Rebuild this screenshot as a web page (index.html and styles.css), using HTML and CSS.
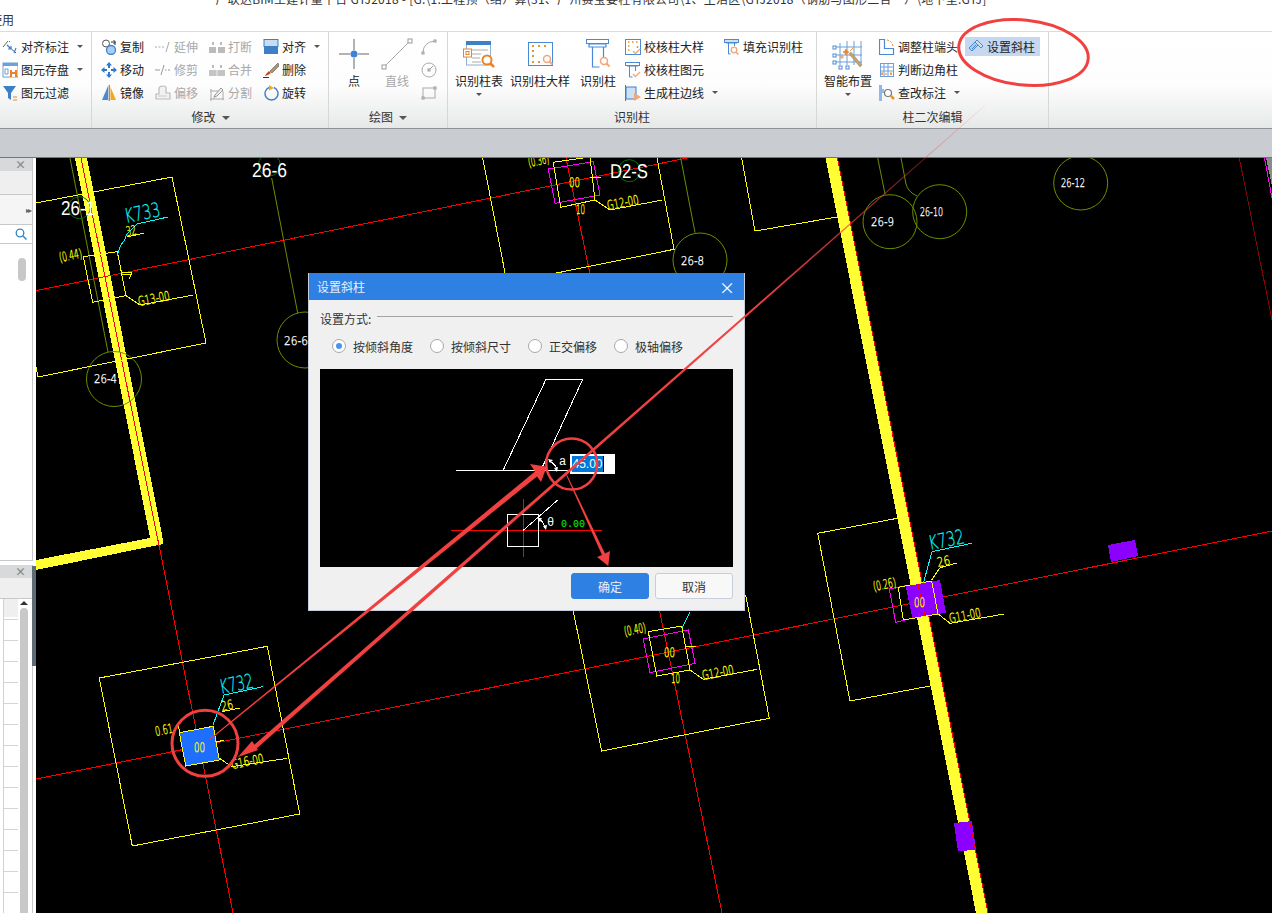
FILE: index.html
```html
<!DOCTYPE html>
<html lang="zh-CN">
<head>
<meta charset="utf-8">
<title>设置斜柱</title>
<link rel="stylesheet" href="styles.css">
</head>
<body>
<svg class="sprite" width="0" height="0">
  <defs>
    <symbol id="i-alignmark" viewBox="0 0 16 16"><path d="M1 8 6 2M7 3l1-1M6 7l8 7" fill="none" stroke="#666"/><path d="M5 6l4 4M9 10V7M9 10H6M14 9l-2 5" fill="none" stroke="#3d80c8" stroke-width="1.2"/></symbol>
    <symbol id="i-save" viewBox="0 0 16 16"><rect x="1" y="1" width="15" height="14" fill="#fff" stroke="#6d9fd8"/><rect x="1" y="1" width="15" height="3" fill="#6d9fd8"/><path d="M3 7h3v5H3z" fill="none" stroke="#6d9fd8"/><rect x="8" y="8" width="7" height="7" fill="#e8842c"/><rect x="10" y="8" width="3" height="2" fill="#fff"/><rect x="10" y="12" width="3" height="3" fill="#fff"/></symbol>
    <symbol id="i-filter" viewBox="0 0 16 16"><path d="M1 1h13L9 8v7L6 13V8z" fill="#3d80c8"/><path d="M11 12h4M11 15h4" stroke="#e8842c" stroke-width="1.2"/></symbol>
    <symbol id="i-copy" viewBox="0 0 16 16"><circle cx="5" cy="4.500" r="3.500" fill="#fff" stroke="#555"/><circle cx="10" cy="11" r="4.500" fill="#a9cdf0" stroke="#3d80c8" stroke-width="1.300"/><path d="M10 3h4v3M12.500 1 14.500 3 12.500 5" fill="none" stroke="#333"/></symbol>
    <symbol id="i-move" viewBox="0 0 16 16"><path d="M8 0 11 3.500H9V7h3.500V5L16 8l-3.500 3V9H9v3.500h2L8 16l-3-3.500h2V9H3.500v2L0 8l3.500-3v2H7V3.500H5z" fill="#2c78cf"/><rect x="6" y="6" width="4" height="4" fill="#fff"/></symbol>
    <symbol id="i-mirror" viewBox="0 0 16 16"><path d="M7 1v14H1z" fill="#4a8ad4"/><path d="M9.500 2v13H15z" fill="#f0a81e"/><path d="M8.200 0v16" stroke="#666"/></symbol>
    <symbol id="i-extend" viewBox="0 0 16 16"><path d="M0 8h2M3.500 8h2M7 8h2M14 3l-3 10" fill="none" stroke="#aaa"/></symbol>
    <symbol id="i-trim" viewBox="0 0 16 16"><path d="M0 8h5M10 8h1.500M13 8h2M9 3 6 13" fill="none" stroke="#999"/></symbol>
    <symbol id="i-break" viewBox="0 0 16 16"><rect x="0" y="8" width="7" height="6" fill="#bbb"/><rect x="9" y="8" width="7" height="6" fill="#bbb"/><path d="M3 3h2v3H3zM11 3h2v3h-2z" fill="#bbb"/></symbol>
    <symbol id="i-merge" viewBox="0 0 16 16"><rect x="0" y="8" width="16" height="6" fill="#c4c4c4"/><path d="M3 3h2v3H3zM11 3h2v3h-2z" fill="#bbb"/><path d="M8 8v6" stroke="#eee"/></symbol>
    <symbol id="i-offset" viewBox="0 0 16 16"><path d="M1 14V9h3V4q0-3 4-3t3 4v3h4v6z" fill="#f2f2f2" stroke="#bbb" stroke-width="1.200"/><path d="M3 11h9" stroke="#ccc"/></symbol>
    <symbol id="i-split" viewBox="0 0 16 16"><path d="M1 6h9M1 14h14M2 4v12M14 6v9M4 14 12 6" fill="none" stroke="#aaa"/><path d="m6 10 6-7 2 2-6 6-3 1z" fill="#eee" stroke="#999"/></symbol>
    <symbol id="i-align" viewBox="0 0 16 16"><rect x="1" y="0.500" width="14" height="7" fill="#c8dcf4" stroke="#3d80c8"/><rect x="1" y="8" width="14" height="7" fill="#3d80c8"/></symbol>
    <symbol id="i-delete" viewBox="0 0 16 16"><path d="M15 1 7 9l2 2 7-7z" fill="#b59468" stroke="#555" stroke-width="0.600"/><path d="M6 9 3 12l-1 2 3-1 3-2z" fill="#c9491c"/><path d="M0 15.500h6" stroke="#333"/></symbol>
    <symbol id="i-rotate" viewBox="0 0 16 16"><path d="M6 2.500a6.500 6.500 0 1 0 5 0" fill="none" stroke="#3d80c8" stroke-width="1.400"/><path d="M6 0v5.500L11 3z" fill="#f0a81e"/></symbol>
    <symbol id="i-point" viewBox="0 0 32 32"><path d="M16 1v11M16 20v11M1 16h11M20 16h11" stroke="#666"/><circle cx="16" cy="16" r="3.500" fill="#3d80d8"/></symbol>
    <symbol id="i-line" viewBox="0 0 32 32"><path d="M3 29 29 3" stroke="#aaa"/><rect x="1" y="27" width="4" height="4" fill="#fff" stroke="#999"/><rect x="27" y="1" width="4" height="4" fill="#fff" stroke="#999"/></symbol>
    <symbol id="i-arc" viewBox="0 0 16 16"><path d="M2 14q0-11 12-12" fill="none" stroke="#aaa"/><rect x="1" y="13" width="2" height="2" fill="#fff" stroke="#999"/><rect x="13" y="1" width="2" height="2" fill="#fff" stroke="#999"/></symbol>
    <symbol id="i-circle" viewBox="0 0 16 16"><circle cx="8" cy="8" r="7" fill="none" stroke="#aaa"/><path d="M8 8l4-4" stroke="#aaa"/><rect x="7" y="7" width="2" height="2" fill="#fff" stroke="#999"/></symbol>
    <symbol id="i-rect" viewBox="0 0 16 16"><rect x="2" y="3" width="12" height="10" fill="none" stroke="#aaa"/><rect x="1" y="12" width="2" height="2" fill="#fff" stroke="#999"/><rect x="13" y="2" width="2" height="2" fill="#fff" stroke="#999"/></symbol>
    <symbol id="i-table" viewBox="0 0 32 32"><rect x="3.500" y="4" width="24" height="23" fill="#fff" stroke="#8fb0d0"/><rect x="3" y="3" width="25" height="4" fill="#3d80c8"/><path d="M9 12h16M9 16h9M9 20h8M9 24h9" stroke="#aaa"/><rect x="0.500" y="11" width="8" height="8" fill="#fff" stroke="#e8842c"/><rect x="3" y="13.500" width="3" height="3" fill="none" stroke="#e8842c"/><circle cx="24" cy="22" r="4.500" fill="#fff" stroke="#e8842c" stroke-width="2"/><path d="m27 25 4 4" stroke="#e8842c" stroke-width="2.500"/></symbol>
    <symbol id="i-sample" viewBox="0 0 32 32"><rect x="4.500" y="4.500" width="24" height="23" fill="#fff" stroke="#4a8ad4"/><path d="M8 8h2M14 8h2M20 8h2M8 13h2M8 18h2M8 24h2M14 24h2" stroke="#e8942c" stroke-width="2"/><circle cx="23" cy="21" r="3.500" fill="#fff" stroke="#f0a878" stroke-width="1.500"/><path d="m25.500 23.500 3 3" stroke="#f0a878" stroke-width="2"/></symbol>
    <symbol id="i-column" viewBox="0 0 32 32"><rect x="4.500" y="1.500" width="22" height="4" fill="#fff" stroke="#4a8ad4"/><path d="M7 6h17v3H7zM10.500 9v20h7M21.500 9v10" fill="none" stroke="#4a8ad4" stroke-width="1.200"/><circle cx="22" cy="23" r="3.500" fill="#fff" stroke="#f0a878" stroke-width="1.500"/><path d="m24.500 25.500 3 3" stroke="#f0a878" stroke-width="2"/></symbol>
    <symbol id="i-checksample" viewBox="0 0 16 16"><rect x="0.500" y="0.500" width="15" height="15" fill="#fff" stroke="#4a8ad4"/><path d="M3 3h1.500M7 3h1.500M11 3h1.500M3 7h1.500M3 11h1.500M12.500 7v2" stroke="#e8942c" stroke-width="1.500"/><path d="m8 12 2.500 2.500L15 10" fill="none" stroke="#f0a878" stroke-width="1.300"/></symbol>
    <symbol id="i-checkcol" viewBox="0 0 16 16"><rect x="0.500" y="0.500" width="14" height="3" fill="#fff" stroke="#4a8ad4"/><path d="M2 4h11M4.500 4v11h3M10.500 4v5" fill="none" stroke="#4a8ad4"/><path d="m8 12 2.500 2.500L15 10" fill="none" stroke="#f0a878" stroke-width="1.300"/></symbol>
    <symbol id="i-genedge" viewBox="0 0 16 16"><path d="M.5 0v16" stroke="#3d80c8"/><rect x="1" y="2" width="10" height="12" fill="#cfe0f5" stroke="#3d80c8"/><path d="M9 8l7 4-7 4z" fill="#f0a878"/></symbol>
    <symbol id="i-fill" viewBox="0 0 16 16"><rect x="0.500" y="0.500" width="14" height="3" fill="#cfe0f5" stroke="#4a8ad4"/><path d="M2 4h11M4.500 4v11h2M10.500 4v3" fill="none" stroke="#4a8ad4"/><circle cx="10" cy="11" r="2.800" fill="#fff" stroke="#f0a878" stroke-width="1.300"/><path d="m12 13 2.500 2.500" stroke="#f0a878" stroke-width="1.500"/></symbol>
    <symbol id="i-smart" viewBox="0 0 32 32"><path d="M8 5v22M15 3v24M22 3v24M29 3v24M2 9h28M2 17h28M2 24h28" stroke="#6d9fd8" fill="none"/><g fill="#fff" stroke="#4a8ad4"><rect x="1" y="8" width="3" height="3"/><rect x="1" y="16" width="3" height="3"/><rect x="1" y="23" width="3" height="3"/><rect x="7" y="28" width="3" height="3"/><rect x="14" y="28" width="3" height="3"/></g><path d="m17 16 11 13 2-2-11-13z" fill="#c9a06c" stroke="#888" stroke-width="0.500"/><path d="M14 11l1 2 2 1-2 1-1 2-1-2-2-1 2-1zM8 19l4 0M10 17v4M21 10l-3 3" fill="#e8842c" stroke="#e8842c" stroke-width="0.800"/></symbol>
    <symbol id="i-adjust" viewBox="0 0 16 16"><path d="M.5 .5h5v9h9v6H.5z" fill="#fff" stroke="#4a8ad4" stroke-width="1.200"/><path d="M8 1q5 1 6 6" fill="none" stroke="#e8942c" stroke-dasharray="2 1.500"/></symbol>
    <symbol id="i-corner" viewBox="0 0 16 16"><rect x="1.500" y="1.500" width="13" height="13" fill="#fff" stroke="#6d9fd8"/><path d="M5 1v14M9 1v14M1 5h14M1 9h14" stroke="#6d9fd8"/><path d="M2 12h2M6 12h2M11 12h2M3 10v3M12 10v3" stroke="#e8842c"/></symbol>
    <symbol id="i-annot" viewBox="0 0 16 16"><path d="M0 0h3v4h2v4H3v8H0z" fill="#8db8e8"/><circle cx="9" cy="8" r="3.500" fill="#fff" stroke="#777" stroke-width="1.200"/><path d="m12 11 3 3" stroke="#e8942c" stroke-width="2.500"/></symbol>
    <symbol id="i-tilt" viewBox="0 0 16 16"><path d="M1 9 8 2l3 3-7 7z" fill="#a9cdf0" stroke="#4a8ad4"/><path d="M9 1l6 6-2 2-6-6zM8 6l-4 4" fill="#cfe0f5" stroke="#4a8ad4"/></symbol>
  </defs>
</svg>

<div class="app">
  <header class="titlebar"><span class="title-text">广联达BIM土建计量平台 GTJ2018 - [G:\1.工程预（结）算(31、广州赛宝要柱有限公司\1、生活区\GTJ2018（钢筋与图形二合一）\地下室.GTJ]</span></header>
  <nav class="menubar"><span class="menu-item">使用</span></nav>

  <section class="ribbon">
    <div class="group g1">
      <div class="group-body">
        <div class="stack">
          <div class="row"><svg class="ic"><use href="#i-alignmark"/></svg><span>对齐标注</span><i class="caret"></i></div>
          <div class="row"><svg class="ic"><use href="#i-save"/></svg><span>图元存盘</span><i class="caret"></i></div>
          <div class="row"><svg class="ic"><use href="#i-filter"/></svg><span>图元过滤</span></div>
        </div>
      </div>
      <div class="group-label"></div>
    </div>

    <div class="group g2">
      <div class="group-body">
        <div class="grid4">
          <div class="row"><svg class="ic"><use href="#i-copy"/></svg><span>复制</span></div>
          <div class="row off"><svg class="ic"><use href="#i-extend"/></svg><span>延伸</span></div>
          <div class="row off"><svg class="ic"><use href="#i-break"/></svg><span>打断</span></div>
          <div class="row"><svg class="ic"><use href="#i-align"/></svg><span>对齐</span><i class="caret"></i></div>
          <div class="row"><svg class="ic"><use href="#i-move"/></svg><span>移动</span></div>
          <div class="row off"><svg class="ic"><use href="#i-trim"/></svg><span>修剪</span></div>
          <div class="row off"><svg class="ic"><use href="#i-merge"/></svg><span>合并</span></div>
          <div class="row"><svg class="ic"><use href="#i-delete"/></svg><span>删除</span></div>
          <div class="row"><svg class="ic"><use href="#i-mirror"/></svg><span>镜像</span></div>
          <div class="row off"><svg class="ic"><use href="#i-offset"/></svg><span>偏移</span></div>
          <div class="row off"><svg class="ic"><use href="#i-split"/></svg><span>分割</span></div>
          <div class="row"><svg class="ic"><use href="#i-rotate"/></svg><span>旋转</span></div>
        </div>
      </div>
      <div class="group-label">修改<i class="caret big"></i></div>
    </div>

    <div class="group g3">
      <div class="group-body">
        <div class="big-btn w30"><svg class="ic-l"><use href="#i-point"/></svg><span>点</span></div>
        <div class="big-btn w30 off"><svg class="ic-l"><use href="#i-line"/></svg><span>直线</span></div>
        <div class="stack mini">
          <div class="row"><svg class="ic"><use href="#i-arc"/></svg></div>
          <div class="row"><svg class="ic"><use href="#i-circle"/></svg></div>
          <div class="row"><svg class="ic"><use href="#i-rect"/></svg></div>
        </div>
      </div>
      <div class="group-label">绘图<i class="caret big"></i></div>
    </div>

    <div class="group g4">
      <div class="group-body">
        <div class="big-btn w48"><svg class="ic-l"><use href="#i-table"/></svg><span>识别柱表</span><i class="caret"></i></div>
        <div class="big-btn w60"><svg class="ic-l"><use href="#i-sample"/></svg><span>识别柱大样</span></div>
        <div class="big-btn w36"><svg class="ic-l"><use href="#i-column"/></svg><span>识别柱</span></div>
        <div class="stack w99">
          <div class="row"><svg class="ic"><use href="#i-checksample"/></svg><span>校核柱大样</span></div>
          <div class="row"><svg class="ic"><use href="#i-checkcol"/></svg><span>校核柱图元</span></div>
          <div class="row"><svg class="ic"><use href="#i-genedge"/></svg><span>生成柱边线</span><i class="caret"></i></div>
        </div>
        <div class="stack">
          <div class="row"><svg class="ic"><use href="#i-fill"/></svg><span>填充识别柱</span></div>
        </div>
      </div>
      <div class="group-label">识别柱</div>
    </div>

    <div class="group g5">
      <div class="group-body">
        <div class="big-btn w48"><svg class="ic-l"><use href="#i-smart"/></svg><span>智能布置</span><i class="caret"></i></div>
        <div class="stack w86">
          <div class="row"><svg class="ic"><use href="#i-adjust"/></svg><span>调整柱端头</span></div>
          <div class="row"><svg class="ic"><use href="#i-corner"/></svg><span>判断边角柱</span></div>
          <div class="row"><svg class="ic"><use href="#i-annot"/></svg><span>查改标注</span><i class="caret"></i></div>
        </div>
        <div class="stack">
          <div class="row active"><svg class="ic"><use href="#i-tilt"/></svg><span>设置斜柱</span></div>
        </div>
      </div>
      <div class="group-label">柱二次编辑</div>
    </div>
  </section>

  <div class="band"></div>

  <main class="work">
    <aside class="side">
      <div class="panel panel-top">
        <div class="panel-head"><span class="close">×</span></div>
        <div class="panel-tint"></div>
        <div class="panel-tool"><span class="dbl">▸▸</span></div>
        <div class="panel-search">
          <svg class="search-ic" viewBox="0 0 12 12"><circle cx="5" cy="5" r="3.800" fill="none" stroke="#2e86c8" stroke-width="1.300"/><path d="m8 8 3.500 3.500" stroke="#2e86c8" stroke-width="1.500"/></svg>
        </div>
        <div class="panel-list"><div class="thumb"></div></div>
      </div>
      <div class="panel panel-bottom">
        <div class="panel-head"><span class="close">×</span></div>
        <div class="panel-tint tall"></div>
        <div class="table-wrap">
          <div class="table-rows"></div>
          <div class="scroll"><span class="scroll-up"></span><div class="scroll-bar"></div></div>
        </div>
        <div class="grip"></div>
      </div>
    </aside>

    <div class="canvas">
      <svg class="cad" viewBox="36 158 1236 755" width="1236" height="755">
        <!-- beams -->
        <polygon class="f-yellow" points="75,158 87,158 163,540 163,544 36,570 36,560 150,538"/>
        <polygon class="f-yellow" points="825.500,158 837.500,158 988,913 976,913"/>
        <polygon class="f-purple" points="954,823 972,821 976,850 958,851"/>
        <polygon class="f-purple" points="1108,545 1135,540 1138,556 1111,562"/>
        <line class="lr" x1="837.500" y1="158" x2="988" y2="913"/>

        <!-- axes -->
        <line class="lr" x1="81" y1="158" x2="233" y2="913"/>
        <line class="lr" x1="36" y1="290.700" x2="692" y2="157"/>
        <line class="lr" x1="36" y1="779" x2="1272" y2="531"/>
        <line class="lr" x1="566" y1="158" x2="722" y2="913"/>

        <!-- olive grid bubbles -->
        <line class="lo" x1="70" y1="158" x2="108" y2="352"/>
        <line class="lo" x1="271.700" y1="178" x2="297.700" y2="313"/>
        <line class="lo" x1="680.700" y1="158" x2="695" y2="232.700"/>
        <line class="lo" x1="877.700" y1="158" x2="885" y2="194"/>
        <path class="lo" d="M901 158 906 184Q908 192 917 196"/>
        <circle class="lo" cx="114" cy="379" r="27.500"/>
        <circle class="lo" cx="305" cy="340" r="28"/>
        <circle class="lo" cx="700" cy="260" r="27"/>
        <circle class="lo" cx="890" cy="221.700" r="27"/>
        <circle class="lo" cx="939.700" cy="211.700" r="27"/>
        <circle class="lo" cx="1080.700" cy="183" r="27"/>
        <circle class="lg" cx="79.300" cy="207.700" r="11"/>
        <circle class="lg" cx="269.300" cy="165" r="11"/>
        <circle class="lg" cx="629.300" cy="170.700" r="11"/>
        <text class="tw big" x="61" y="215" textLength="34" lengthAdjust="spacingAndGlyphs">26-1</text>
        <text class="tw big" x="252" y="177" textLength="35" lengthAdjust="spacingAndGlyphs">26-6</text>
        <text class="tw big" x="610" y="178" textLength="38" lengthAdjust="spacingAndGlyphs">D2-S</text>
        <text class="tw" x="94" y="383" textLength="23" lengthAdjust="spacingAndGlyphs">26-4</text>
        <text class="tw" x="284" y="345" textLength="24" lengthAdjust="spacingAndGlyphs">26-6</text>
        <text class="tw" x="681" y="265" textLength="23" lengthAdjust="spacingAndGlyphs">26-8</text>
        <text class="tw" x="871" y="226" textLength="23" lengthAdjust="spacingAndGlyphs">26-9</text>
        <text class="tw" x="920" y="216" textLength="23" lengthAdjust="spacingAndGlyphs">26-10</text>
        <text class="tw" x="1061" y="187" textLength="24" lengthAdjust="spacingAndGlyphs">26-12</text>

        <!-- right edge details -->
        <line class="ldr" x1="1239.300" y1="158" x2="1272" y2="320"/>
        <line class="lm" x1="1264.500" y1="158" x2="1272" y2="198"/>
        <polygon class="f-grey" points="1266,158 1272,158 1272,186"/>

        <!-- frames -->
        <polyline class="ly" points="36,203 172,177 206,343 38,377 36,367"/>
        <polyline class="ly" points="99.300,678 267.300,646.300 299.700,814 132.300,846 99.300,678"/>
        <polyline class="ly" points="482.700,158 507,283 674,249.300 657,158"/>
        <polyline class="ly" points="570,595 601.700,751 769.300,718.300 745.700,595"/>
        <polyline class="ly" points="741.700,158 755,231 837,217"/>
        <polyline class="ly" points="897.300,518.300 817.700,533.300 850,701 931.700,685.700"/>

        <!-- K733 -->
        <polygon class="ly" points="83.300,256.700 117.300,251.700 126,295.700 92.700,302.300"/>
        <polyline class="ly" points="126,295.700 140,305 193.300,295"/>
        <line class="ly" x1="127" y1="237" x2="144" y2="233"/>
        <polyline class="ly" points="122,272 132,272 129,279"/>
        <line class="ly" x1="122" y1="275" x2="132" y2="274"/>
        <path class="lc" d="M117 256Q120 245 124 241L127 234 137 224 168 217"/>
        <text class="tc" transform="rotate(-11 126 223)" x="126" y="223" textLength="36" lengthAdjust="spacingAndGlyphs">K733</text>
        <text class="ty" transform="rotate(-11 127 236)" x="127" y="236" textLength="10" lengthAdjust="spacingAndGlyphs">32</text>
        <text class="ty" transform="rotate(-11 60 262)" x="60" y="262" textLength="23" lengthAdjust="spacingAndGlyphs">(0.44)</text>
        <text class="ty" transform="rotate(-11 139 306)" x="139" y="306" textLength="32" lengthAdjust="spacingAndGlyphs">G13-00</text>

        <!-- top column -->
        <polygon class="lm" points="548.300,169 593.300,161.700 600,195 555,203.300"/>
        <polygon class="ly" points="553.300,162.300 590,157 595,200 560.700,207.300"/>
        <polyline class="ly" points="595,200 610,210 662.300,200"/>
        <line class="ly" x1="590" y1="177" x2="601" y2="177"/>
        <text class="ty" x="569" y="187" textLength="11" lengthAdjust="spacingAndGlyphs">00</text>
        <text class="ty" transform="rotate(-11 529 167)" x="529" y="167" textLength="21" lengthAdjust="spacingAndGlyphs">(0.36)</text>
        <text class="ty" transform="rotate(-11 608 210)" x="608" y="210" textLength="32" lengthAdjust="spacingAndGlyphs">G12-00</text>
        <text class="ty" x="576" y="214" textLength="9" lengthAdjust="spacingAndGlyphs">10</text>

        <!-- center column -->
        <polygon class="lm" points="643.300,639 688.300,630 695,663.300 650,672.700"/>
        <polygon class="ly" points="648.300,631.700 681.700,626 690,670 656.700,676"/>
        <polyline class="ly" points="690,670 703.300,679.300 757.300,669.300"/>
        <line class="lc" x1="681.700" y1="628.300" x2="690" y2="611.700"/>
        <line class="ly" x1="686" y1="647" x2="696" y2="646"/>
        <text class="ty" x="664" y="657" textLength="11" lengthAdjust="spacingAndGlyphs">00</text>
        <text class="ty" transform="rotate(-11 625 636)" x="625" y="636" textLength="22" lengthAdjust="spacingAndGlyphs">(0.40)</text>
        <text class="ty" transform="rotate(-11 703 680)" x="703" y="680" textLength="32" lengthAdjust="spacingAndGlyphs">G12-00</text>
        <text class="ty" x="671" y="683" textLength="9" lengthAdjust="spacingAndGlyphs">10</text>

        <!-- right K732 -->
        <polygon class="f-purple" points="905.700,585.700 940,580 946,612.700 912.300,618.300"/>
        <polyline class="lm" points="905.700,585.700 889.300,589 895.700,622.300 912.300,618.300"/>
        <line class="lr" x1="918" y1="584" x2="925" y2="617"/>
        <polyline class="ly" points="898.300,587.300 931.700,581 938,614 903.300,620 898.300,587.300"/>
        <polyline class="ly" points="938.300,614 950,623.300 1004.300,614"/>
        <polyline class="ly" points="931.700,580 940,567.700 957,563"/>
        <polyline class="lc" points="923.300,583.300 932,551.700 971.700,543.300"/>
        <text class="tc" transform="rotate(-11 930 550)" x="930" y="550" textLength="36" lengthAdjust="spacingAndGlyphs">K732</text>
        <text class="ty" transform="rotate(-11 938 567)" x="938" y="567" textLength="13" lengthAdjust="spacingAndGlyphs">26</text>
        <text class="ty" transform="rotate(-11 874 591)" x="874" y="591" textLength="23" lengthAdjust="spacingAndGlyphs">(0.26)</text>
        <text class="ty" transform="rotate(-11 950 623)" x="950" y="623" textLength="32" lengthAdjust="spacingAndGlyphs">G11-00</text>
        <text class="ty" x="914" y="607" textLength="11" lengthAdjust="spacingAndGlyphs">00</text>

        <!-- selected K732 -->
        <polygon class="f-blue" points="179.300,732.700 213.300,726.300 219.300,760 185.700,766"/>
        <polyline class="ly" points="179.300,732.700 178.500,723"/>
        <polyline class="ly" points="219,758 231.700,766.700 287.300,758.300"/>
        <polyline class="ly" points="221.700,711.700 240,708"/>
        <polyline class="ly" points="217,742 224,740"/>
        <polyline class="lc" points="213,725 224,695 262.700,686.700"/>
        <text class="tc" transform="rotate(-11 221 694)" x="221" y="694" textLength="34" lengthAdjust="spacingAndGlyphs">K732</text>
        <text class="ty" transform="rotate(-11 222 711)" x="222" y="711" textLength="12" lengthAdjust="spacingAndGlyphs">26</text>
        <text class="ty" transform="rotate(-11 156 736)" x="156" y="736" textLength="18" lengthAdjust="spacingAndGlyphs">0.61</text>
        <text class="ty" transform="rotate(-11 232 769)" x="232" y="769" textLength="33" lengthAdjust="spacingAndGlyphs">G16-00</text>
        <text class="ty" x="194" y="752" textLength="11" lengthAdjust="spacingAndGlyphs">00</text>
      </svg>
    </div>
  </main>

  <section class="dialog">
    <div class="dlg-title"><span>设置斜柱</span><span class="dlg-x">×</span></div>
    <div class="dlg-body">
      <div class="legend"><span>设置方式:</span><div class="legend-line"></div></div>
      <div class="radios">
        <label class="radio r1"><i class="dot on"></i><span>按倾斜角度</span></label>
        <label class="radio r1"><i class="dot"></i><span>按倾斜尺寸</span></label>
        <label class="radio r2"><i class="dot"></i><span>正交偏移</span></label>
        <label class="radio"><i class="dot"></i><span>极轴偏移</span></label>
      </div>
      <div class="preview">
        <svg class="preview-svg" viewBox="320 369 413 198" width="413" height="198">
          <polygon class="pw" points="546,379.300 582.700,379.300 541,470 503.300,470"/>
          <line class="pw" x1="456" y1="470.300" x2="571.700" y2="470.300"/>
          <path class="pw" d="M549 461Q556 464 557 470"/>
          <path class="pa" d="M548 459l5 1-3 3zM557 472l-3-4 4-1z"/>
          <text class="pt" x="559" y="465">a</text>
          <line class="pr" x1="451" y1="530.300" x2="601.700" y2="530.300"/>
          <line class="pr" x1="523.300" y1="499" x2="523.300" y2="556.700"/>
          <rect class="pw" x="507.500" y="514.500" width="31" height="32"/>
          <line class="pw" x1="523.300" y1="530.300" x2="557.700" y2="500"/>
          <path class="pw" d="M539 519Q544 522 545 528"/>
          <path class="pa" d="M537 518l5 0-2 4zM546 530l-3-4 4-1z"/>
          <text class="pt" x="547" y="526">θ</text>
          <text class="pg" x="561" y="527">0.00</text>
        </svg>
        <div class="angle"><span class="angle-sel">45.00</span><i class="angle-caret"></i></div>
      </div>
      <div class="actions">
        <button class="btn primary">确定</button>
        <button class="btn">取消</button>
      </div>
    </div>
  </section>

  <svg class="marks" viewBox="0 0 1272 913" width="1272" height="913">
    <defs>
      <linearGradient id="fade" gradientUnits="userSpaceOnUse" x1="985" y1="105" x2="760" y2="305">
        <stop offset="0" stop-color="#f04040" stop-opacity="0.100"/>
        <stop offset="0.400" stop-color="#f04040" stop-opacity="0.550"/>
        <stop offset="1" stop-color="#f04040"/>
      </linearGradient>
    </defs>
    <ellipse class="m-ring thick" cx="1023.500" cy="52.500" rx="65" ry="32.500" transform="rotate(6 1023.500 52.500)"/>
    <circle class="m-ring thick" cx="205" cy="743.300" r="33"/>
    <circle class="m-ring" cx="571.700" cy="464" r="25.500"/>
    <polygon class="m-fill" points="210,738.600 535,471.500 530,464 546.700,466.700 541,482 537,476.500 210.500,739.400"/>
    <polygon class="m-grad" points="985,105 253,746 256,749 985.500,105.500"/>
    <polygon class="m-fill" points="252,741 238,757 258,750"/>
    <polygon class="m-fill" points="566.200,475.200 602,555 597,557 608.300,566 610,551 605,553.500 567,474.800"/>
  </svg>
</div>
</body>
</html>
```

FILE: styles.css
```css
* { box-sizing: border-box; }

html, body {
  margin: 0;
  padding: 0;
  width: 1272px;
  height: 913px;
  overflow: hidden;
  background: #fff;
}

body {
  font-family: "Noto Sans CJK SC", "Liberation Sans", sans-serif;
  font-size: 12px;
  color: #222;
}

.sprite { position: absolute; }

.app {
  position: relative;
  width: 1272px;
  height: 913px;
  display: flex;
  flex-direction: column;
  overflow: hidden;
}

/* title + menu */
.titlebar {
  height: 9px;
  overflow: hidden;
  text-align: center;
  padding-right: 70px;
  white-space: nowrap;
  background: #fff;
}
.title-text {
  display: block;
  margin-top: -10px;
  font-size: 12px;
  letter-spacing: 0.250px;
  line-height: 18px;
  color: #333;
}

.menubar {
  height: 23px;
  overflow: hidden;
  background: #fff;
  border-bottom: 1px solid #dcdcdc;
}
.menu-item {
  display: block;
  margin-left: -10px;
  margin-top: 4px;
  line-height: 14px;
  color: #333;
}

/* ribbon */
.ribbon {
  height: 97px;
  display: flex;
  background: linear-gradient(#fff 0%, #fdfdfd 55%, #e7e9e9 100%);
  border-bottom: 1px solid #8e9296;
}
.group {
  display: flex;
  flex-direction: column;
  border-right: 1px solid #d6d8d8;
}
.g1 { width: 92px; padding-left: 2px; }
.g2 { width: 237px; padding-left: 9px; }
.g3 { width: 119px; padding-left: 10px; }
.g4 { width: 369px; padding-left: 7px; }
.g5 { width: 232px; padding-left: 7px; }

.group-body {
  flex: 1;
  display: flex;
  padding-top: 3px;
  min-height: 0;
}
.group-label {
  height: 24px;
  line-height: 26px;
  text-align: center;
  color: #333;
}
.g2 .group-label { padding-right: 8px; }
.g3 .group-label { padding-right: 10px; }
.g4 .group-label { padding-right: 7px; }
.g5 .group-label { padding-right: 7px; }

.stack { display: flex; flex-direction: column; }
.w99 { width: 99px; margin-left: 9px; }
.w86 { width: 86px; margin-left: 7px; }
.mini { margin-left: 9px; }

.grid4 {
  display: grid;
  grid-template-columns: repeat(4, 54px);
  grid-auto-rows: 23px;
}

.row {
  height: 23px;
  display: flex;
  align-items: center;
  gap: 3px;
  white-space: nowrap;
}
.row.off, .big-btn.off { color: #a8a8a8; }
.active { position: relative; }
.row.active {
  width: 75px;
  height: 19px;
  margin-top: 2px;
  padding-left: 3px;
  background: #c5d8f0;
}

.ic { width: 16px; height: 16px; flex: none; }
.ic-l { width: 32px; height: 32px; flex: none; margin: 2px 0; }

.big-btn {
  display: flex;
  flex-direction: column;
  align-items: center;
  white-space: nowrap;
  line-height: 18px;
  padding-top: 1px;
}
.w30 { width: 30px; margin-right: 13px; }
.w30 + .stack { margin-left: -4px; }
.w48 { width: 48px; margin-right: 7px; }
.w60 { width: 60px; margin-right: 10px; }
.w36 { width: 36px; }
.g5 .w48 { margin-right: 0; }

.caret {
  display: inline-block;
  width: 0;
  height: 0;
  margin-left: 5px;
  border-left: 3px solid transparent;
  border-right: 3px solid transparent;
  border-top: 3px solid #555;
}
.big-btn .caret { margin: 3px 0 0; }
.caret.big {
  margin-left: 6px;
  vertical-align: 2px;
  border-left-width: 4px;
  border-right-width: 4px;
  border-top-width: 4px;
}

.band {
  height: 29px;
  background: #c9ccd0;
  border-bottom: 1px solid #71767a;
}

/* main */
.work {
  flex: 1;
  display: flex;
  min-height: 0;
}
.side {
  width: 36px;
  flex: none;
  display: flex;
  flex-direction: column;
  background: #fff;
}
.panel {
  position: relative;
  border-right: 1px solid #c8c8c8;
  width: 33px;
  display: flex;
  flex-direction: column;
}
.panel-top { height: 403px; border-bottom: 1px solid #c8c8c8; }
.panel-bottom { flex: 1; margin-top: 4px; }

.panel-head {
  height: 13px;
  flex: none;
  background: #d8d9db;
  text-align: right;
  padding-right: 6px;
}
.close {
  display: block;
  color: #888;
  font-weight: 700;
  font-size: 11px;
  line-height: 13px;
}
.panel-tint {
  height: 24px;
  flex: none;
  background: #efefef;
  border-bottom: 1px solid #c8c8c8;
}
.panel-tint.tall { height: 21px; }
.panel-tool {
  height: 30px;
  flex: none;
  border-bottom: 1px solid #c8c8c8;
  background: #f5f5f5;
  text-align: right;
  padding-right: 2px;
}
.dbl {
  font-size: 8px;
  line-height: 30px;
  letter-spacing: -2px;
  color: #666;
}
.panel-search {
  height: 19px;
  flex: none;
  border-bottom: 1px solid #c8c8c8;
  background: #fff;
  padding: 3px 0 0 15px;
}
.search-ic { display: block; width: 12px; height: 12px; }
.panel-list { flex: 1; padding: 14px 0 0 18px; background: #fff; }
.thumb {
  width: 8px;
  height: 23px;
  border-radius: 4px;
  background: #c8c8c8;
}

.table-wrap {
  flex: 1;
  position: relative;
  min-height: 0;
}
.table-rows {
  height: 100%;
  margin-right: 14px;
  border-left: 1px solid #d2d2d2;
  margin-left: 3px;
  background:
    linear-gradient(#efefef, #efefef) 0 0 / 100% 18px no-repeat,
    repeating-linear-gradient(#fff 0 20px, #d4d4d4 20px 21px);
}
.scroll {
  position: absolute;
  top: 0;
  bottom: 0;
  left: 19px;
  width: 10px;
  display: flex;
  flex-direction: column;
  align-items: center;
}
.scroll-up {
  margin-top: 2px;
  width: 0;
  height: 0;
  border-left: 4px solid transparent;
  border-right: 4px solid transparent;
  border-bottom: 4px solid #333;
}
.scroll-bar {
  flex: 1;
  width: 8px;
  margin-top: 3px;
  border-radius: 4px 4px 0 0;
  background: #c8c8c8;
}
.grip {
  position: absolute;
  top: 1px;
  left: 32px;
  width: 4px;
  height: 100px;
  background: #5f6b75;
}

/* cad canvas */
.canvas {
  flex: 1;
  min-width: 0;
  background: #000;
  overflow: hidden;
}
.cad { display: block; shape-rendering: crispEdges; }
.cad text {
  font-family: "DejaVu Sans", sans-serif;
  font-weight: 200;
  font-size: 13px;
  text-rendering: geometricPrecision;
}
.f-yellow { fill: #ffff33; }
.f-purple { fill: #8b00ff; }
.f-blue { fill: #1e6eff; stroke: #ffff00; }
.f-grey { fill: #8a8a8a; }
.ly, .lr, .lc, .lm, .lo, .lg, .ldr { fill: none; stroke-width: 1; }
.ly { stroke: #ffff00; }
.lr { stroke: #ff0000; }
.lc { stroke: #00ffff; }
.lm { stroke: #ff00ff; }
.lo { stroke: #6b8e00; shape-rendering: geometricPrecision; }
.lg { stroke: #0a6e0a; shape-rendering: geometricPrecision; }
.ldr { stroke: #8b0000; }
.ty { fill: #ffff00; stroke: #ffff00; stroke-width: 0.350; }
.cad .tc { fill: #00ffff; stroke: #00ffff; stroke-width: 0.200; font-size: 20px; }
.tw { fill: #fff; stroke: #fff; stroke-width: 0.350; }
.cad .tw { font-size: 12px; }
.cad .tw.big {
  font-family: "Liberation Sans", sans-serif;
  font-weight: 400;
  font-size: 20px;
  stroke-width: 0;
}

/* dialog */
.dialog {
  position: absolute;
  left: 308px;
  top: 273px;
  width: 437px;
  height: 338px;
  display: flex;
  flex-direction: column;
  background: #f0f0f0;
  border: 1px solid #c6cede;
  border-top: 0;
}
.dlg-title {
  height: 27px;
  flex: none;
  display: flex;
  align-items: center;
  justify-content: space-between;
  padding: 0 9px 0 8px;
  background: #2f80e3;
  color: #e8f0fb;
}
.dlg-x { color: #fff; font-size: 16px; line-height: 16px; }
.dlg-body {
  flex: 1;
  display: flex;
  flex-direction: column;
  padding: 9px 11px 0;
}
.legend {
  display: flex;
  align-items: center;
  gap: 6px;
  height: 18px;
  color: #333;
}
.legend-line {
  flex: 1;
  height: 1px;
  margin-top: -4px;
  background: #a4a4a4;
}
.radios {
  display: flex;
  padding-left: 12px;
  margin-top: 7px;
  height: 24px;
  align-items: center;
  color: #333;
}
.radio {
  display: flex;
  align-items: center;
  gap: 7px;
}
.radio.r1 { width: 98px; }
.radio.r2 { width: 86px; }
.dot {
  position: relative;
  display: block;
  width: 14px;
  height: 14px;
  border-radius: 50%;
  background: #fff;
  border: 1px solid #a8a8a8;
}
.dot.on::after {
  content: "";
  position: absolute;
  left: 3px;
  top: 3px;
  width: 6px;
  height: 6px;
  border-radius: 50%;
  background: #4a94f0;
}
.preview {
  position: relative;
  height: 198px;
  margin-top: 11px;
  background: #000;
}
.preview-svg { display: block; }
.pw { fill: none; stroke: #fff; stroke-width: 1; shape-rendering: crispEdges; }
.pa { fill: #fff; }
.pr { stroke: #ff0000; stroke-width: 1; shape-rendering: crispEdges; }
.pt {
  fill: #fff;
  font-family: "Liberation Mono", monospace;
  font-size: 12px;
}
.pg {
  fill: #00ff00;
  font-family: "Liberation Mono", monospace;
  font-size: 10px;
}
.angle {
  position: absolute;
  left: 250px;
  top: 85px;
  width: 45px;
  height: 20px;
  padding: 2px 0 0 2px;
  display: flex;
  background: #fff;
}
.angle-sel {
  width: 31px;
  height: 16px;
  background: #0078d7;
  color: #fff;
  font-family: "Liberation Sans", sans-serif;
  font-size: 12px;
  line-height: 16px;
  text-align: center;
}
.angle-caret { width: 1px; height: 16px; background: #000; }
.actions {
  display: flex;
  justify-content: flex-end;
  gap: 6px;
  margin-top: 6px;
}
.btn {
  width: 78px;
  height: 26px;
  padding: 0;
  border: 1px solid #c6cede;
  border-radius: 3px;
  background: #f8f8f8;
  color: #333;
  font: inherit;
}
.btn.primary {
  background: #2f80e3;
  border-color: #2f80e3;
  color: #e8f0fb;
}

/* red annotations drawn on top of the screenshot */
.marks {
  position: absolute;
  left: 0;
  top: 0;
  pointer-events: none;
}
.m-ring { fill: none; stroke: #f04040; stroke-width: 2.500; }
.m-ring.thick { stroke-width: 3; }
.m-fill { fill: #f04040; }
.m-grad { fill: url(#fade); }
```
